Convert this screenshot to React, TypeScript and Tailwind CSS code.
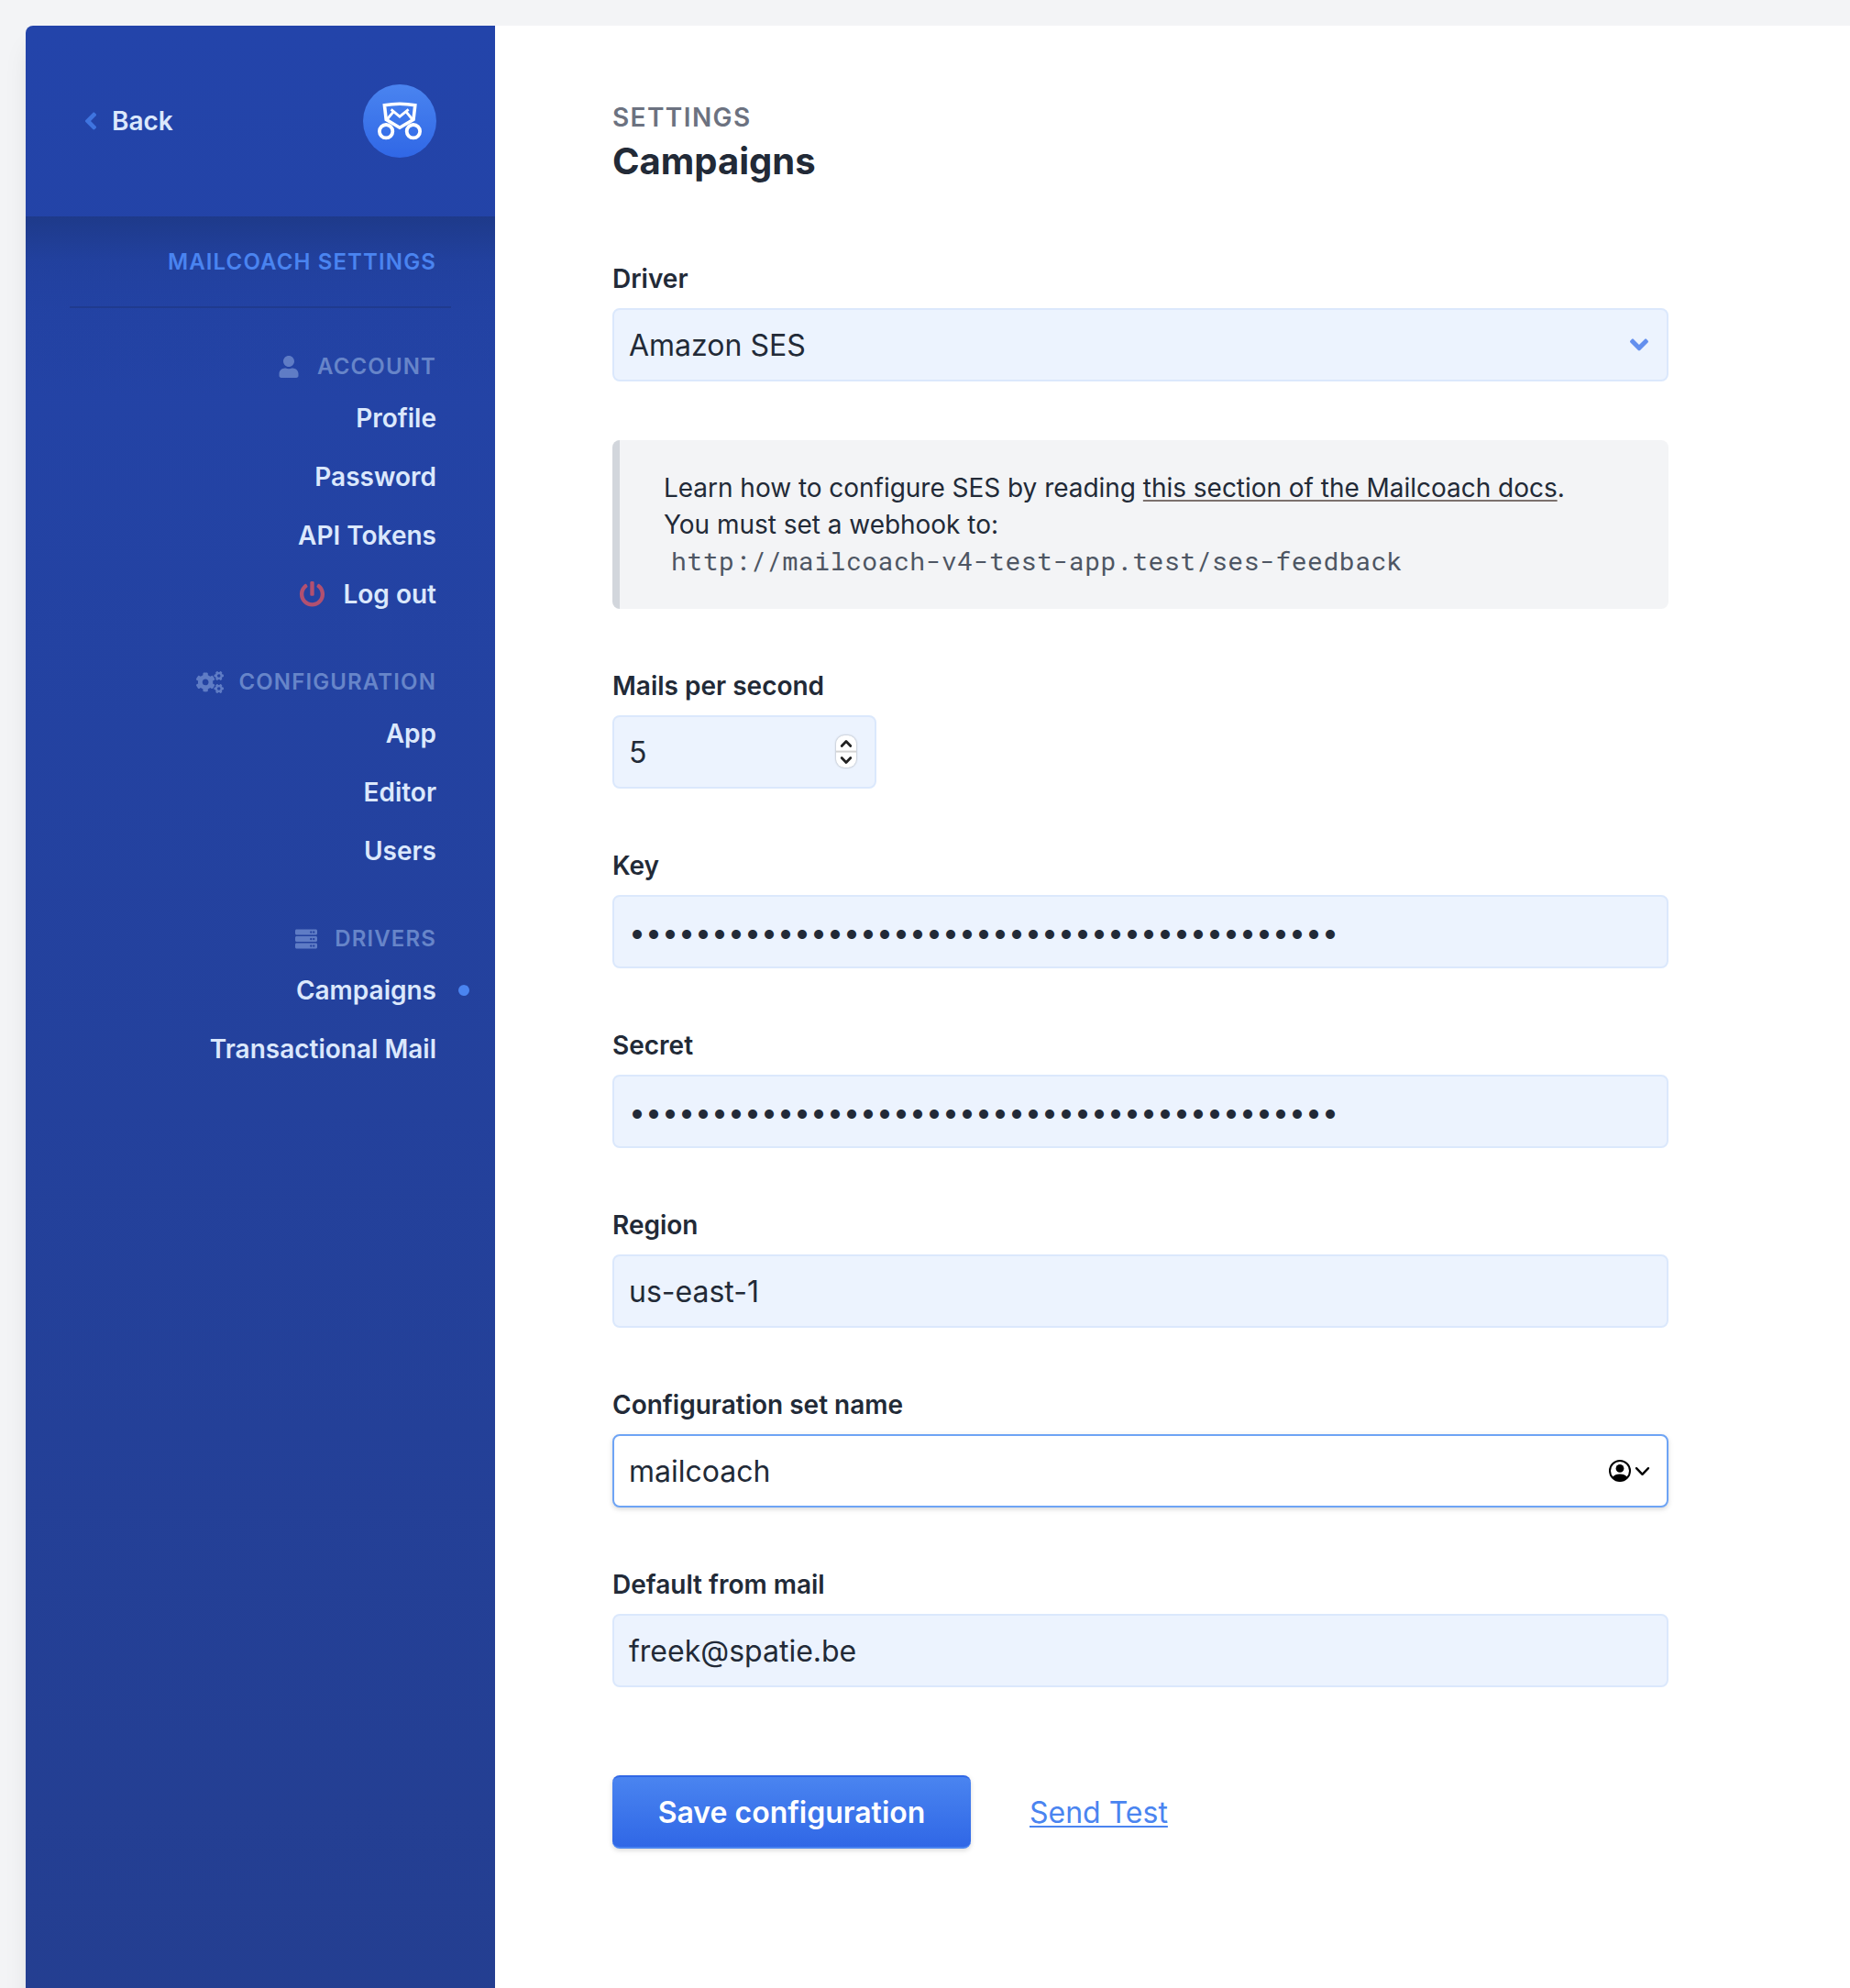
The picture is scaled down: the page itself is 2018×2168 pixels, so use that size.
import type { ComponentType, ReactNode } from 'react';
import { FaAngleDown, FaAngleLeft, FaCogs, FaPowerOff, FaServer, FaUser } from 'react-icons/fa';

type IconType = ComponentType<{ className?: string }>;

function Logo() {
  return (
    <div className="flex size-20 items-center justify-center rounded-full bg-linear-to-b from-[#4a84f0] to-[#3067e6]">
      <svg viewBox="0 0 48 42" className="h-[42px] w-12" fill="none" stroke="#fff">
        <path d="M7.4 3.8Q24 0.6 40.8 3.8L39 19.4L24 28.2L9.2 19.4Z" strokeWidth="3.6" />
        <path d="M14.6 8.4L24 16.2L33.6 8.4M9.5 20L17.2 10.8M38.5 20L31 10.8" strokeWidth="2.8" />
        <circle cx="9.1" cy="32.2" r="7.2" strokeWidth="3.8" />
        <circle cx="38.9" cy="32.2" r="7.2" strokeWidth="3.8" />
      </svg>
    </div>
  );
}

function NavSection({ icon: Icon, title, children }: { icon: IconType; title: string; children: ReactNode }) {
  return (
    <section className="flex flex-col items-end">
      <h3 className="flex h-12 items-center gap-4 text-[24px] font-semibold tracking-[0.047em] text-[#6785c9]">
        <Icon className="h-6 w-[30px] text-[#5f7cc5]" />
        {title}
      </h3>
      <ul className="flex w-full flex-col items-end">{children}</ul>
    </section>
  );
}

function NavItem({ label, icon: Icon, active }: { label: string; icon?: IconType; active?: boolean }) {
  return (
    <li className="relative flex h-16 items-center gap-4 text-[28px] font-semibold text-[#dbe8fc]">
      {Icon && <Icon className="h-7 w-[35px] text-[#b25070]" />}
      {label}
      {active && <span className="absolute -right-9 size-3 rounded-full bg-[#4a84f0]" />}
    </li>
  );
}

function Field({ label, children }: { label: string; children: ReactNode }) {
  return (
    <div className="flex flex-col gap-3">
      <label className="text-[28px] leading-10 font-semibold">{label}</label>
      {children}
    </div>
  );
}

function Input({ children, trailing }: { children: ReactNode; trailing?: ReactNode }) {
  return (
    <div className="flex h-20 items-center justify-between rounded-lg border-2 border-[#dbe8fc] bg-[#ecf3fe] px-4 text-[32px]">
      <span className="pt-0.5">{children}</span>
      {trailing}
    </div>
  );
}

function Stepper() {
  return (
    <svg viewBox="0 0 26 40" className="mt-0.5 mr-0.5 h-10 w-[26px] drop-shadow-[0_0_1px_rgba(0,0,0,0.35)]" fill="none">
      <rect x="2" y="1" width="22" height="35" rx="9" fill="#fff" />
      <path d="M2 18.6H24" stroke="#d4d4d4" strokeWidth="2" />
      <path d="M8.2 12.5L13 7.5L17.8 12.5M8.2 25.5L13 30.5L17.8 25.5" stroke="#222" strokeWidth="2.8" strokeLinecap="round" strokeLinejoin="round" />
    </svg>
  );
}

function AutofillIcon() {
  return (
    <svg viewBox="0 0 46 26" className="mr-0.5 h-[26px] w-[46px]" fill="none">
      <circle cx="13" cy="13" r="11" stroke="#000" strokeWidth="2" />
      <circle cx="13" cy="10.4" r="4.4" fill="#000" />
      <path d="M4.6 20Q8 16.6 13 16.6T21.4 20Q18 24.4 13 24.4T4.6 20Z" fill="#000" />
      <path d="M31 10.2L37.5 16.8L44 10.2" stroke="#000" strokeWidth="2.4" strokeLinecap="round" strokeLinejoin="round" />
    </svg>
  );
}

const MASKED = '•'.repeat(43);

export default function App() {
  return (
    <div className="h-[2168px] overflow-hidden bg-[#f3f4f6] pt-7 pl-7 font-[Inter,sans-serif] text-[#222a37]">
      <div className="flex h-[2300px] rounded-l-lg bg-white shadow-[0_20px_30px_-6px_rgba(0,0,0,0.1),0_8px_12px_-4px_rgba(0,0,0,0.05)]">
        <aside className="flex w-[512px] shrink-0 flex-col rounded-l-lg bg-linear-to-b from-[#2344aa] to-[#243e8f]">
          <header className="flex h-52 items-center justify-between pr-16 pl-[62px]">
            <a className="flex items-center gap-[14px] text-[28px] font-semibold text-[#dbe8fc]">
              <FaAngleLeft className="h-[30px] w-[18px] text-[#3f74df]" />
              Back
            </a>
            <Logo />
          </header>
          <div className="flex flex-1 flex-col bg-[linear-gradient(to_bottom,#1e3a8a_0,rgba(30,58,138,0.3)_50px,rgba(30,58,138,0.12)_100px,transparent_200px)] px-12">
            <div className="flex h-[100px] items-center justify-end border-b-2 border-[#1f3a8e] pt-0.5 pr-4 text-[24px] font-semibold tracking-[0.047em] text-[#4a84f0]">
              MAILCOACH SETTINGS
            </div>
            <nav className="flex flex-col gap-10 pt-10 pr-4">
              <NavSection icon={FaUser} title="ACCOUNT">
                <NavItem label="Profile" />
                <NavItem label="Password" />
                <NavItem label="API Tokens" />
                <NavItem label="Log out" icon={FaPowerOff} />
              </NavSection>
              <NavSection icon={FaCogs} title="CONFIGURATION">
                <NavItem label="App" />
                <NavItem label="Editor" />
                <NavItem label="Users" />
              </NavSection>
              <NavSection icon={FaServer} title="DRIVERS">
                <NavItem label="Campaigns" active />
                <NavItem label="Transactional Mail" />
              </NavSection>
            </nav>
          </div>
        </aside>

        <main className="flex flex-col pt-20 pl-32">
          <div className="h-10 text-[28px] leading-10 font-semibold tracking-[0.05em] text-[#6c7280]">SETTINGS</div>
          <h1 className="h-12 text-[40px] leading-[55px] font-bold">Campaigns</h1>

          <form className="mt-[88px] flex w-[1152px] flex-col gap-16">
            <Field label="Driver">
              <Input trailing={<FaAngleDown className="-mr-0.5 size-8 text-[#638fee]" />}>Amazon SES</Input>
            </Field>

            <div className="rounded-lg border-l-8 border-[#d2d6dc] bg-[#f3f4f6] px-12 py-8 text-[28px] leading-10 tracking-[-0.03px]">
              <p>
                Learn how to configure SES by reading{' '}
                <a className="underline decoration-[#7b716d] decoration-2 underline-offset-[3px]">this section of the Mailcoach docs</a>.
              </p>
              <p>You must set a webhook to:</p>
              <code className="block pl-2 font-['Roboto_Mono','Liberation_Mono',monospace] tracking-[0.55px] text-[#4e5663]">
                http://mailcoach-v4-test-app.test/ses-feedback
              </code>
            </div>

            <div className="w-72">
              <Field label="Mails per second">
                <Input trailing={<Stepper />}>5</Input>
              </Field>
            </div>
            <Field label="Key">
              <Input>{MASKED}</Input>
            </Field>
            <Field label="Secret">
              <Input>{MASKED}</Input>
            </Field>
            <Field label="Region">
              <Input>us-east-1</Input>
            </Field>
            <Field label="Configuration set name">
              <div className="flex h-20 items-center justify-between rounded-lg border-2 border-[#6ea4f5] bg-white px-4 text-[32px] shadow-[0_2px_6px_rgba(0,0,0,0.1),0_2px_4px_rgba(0,0,0,0.06)]">
                <span className="pt-0.5">mailcoach</span>
                <AutofillIcon />
              </div>
            </Field>
            <Field label="Default from mail">
              <Input>freek@spatie.be</Input>
            </Field>

            <div className="mt-8 flex items-center gap-16 text-[32px]">
              <button
                type="button"
                className="h-20 w-[391px] rounded-lg border-y-2 border-t-[#3067e6] border-b-[#4a84f0] bg-linear-to-b from-[#4a84f0] to-[#3067e6] pt-0.5 font-semibold text-white shadow-[0_2px_6px_rgba(0,0,0,0.1),0_2px_4px_rgba(0,0,0,0.06)]"
              >
                Save configuration
              </button>
              <a className="pt-0.5 text-[#4a84f0] underline decoration-2 underline-offset-[3px]">Send Test</a>
            </div>
          </form>
        </main>
      </div>
    </div>
  );
}
